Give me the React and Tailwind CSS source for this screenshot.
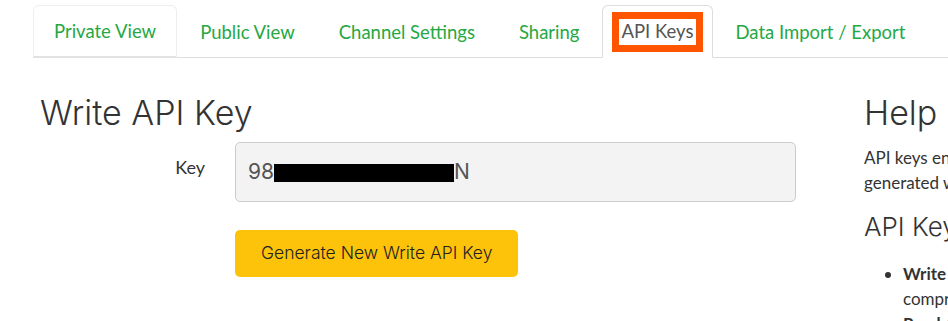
export default function App() {
  const tabs = ['Private View', 'Public View', 'Channel Settings', 'Sharing', 'API Keys', 'Data Import / Export']

  return (
    <div className="w-[948px] h-[321px] overflow-hidden bg-white font-['Lato',sans-serif] text-[#333]">
      {/* Tabs */}
      <ul className="ml-[33px] pt-[5px] flex border-b border-[#ddd]">
        {tabs.map((t) => {
          if (t === 'API Keys') {
            return (
              <li key={t} className="mr-[2px] -mb-px">
                <div className="h-[53px] px-[9px] flex items-center bg-white border border-[#ddd] border-b-white rounded-t-[6px]">
                  <span className="border-[7px] border-[#ff5500] px-[2px] h-[40px] flex items-center text-[18.5px] text-[#555]">
                    {t}
                  </span>
                </div>
              </li>
            )
          }
          const hover = t === 'Private View'
          return (
            <li key={t} className="mr-[2px] -mb-px">
              <div
                className={
                  hover
                    ? 'h-[53px] px-5 pt-[2px] flex items-center border border-[#eee] border-b-2 border-b-[#e2e2e2] rounded-t-[6px] text-[18.5px] text-[#25a844]'
                    : 'h-[53px] px-5 pt-[2px] flex items-center border border-transparent text-[18.5px] text-[#25a844]'
                }
              >
                {t}
              </div>
            </li>
          )
        })}
      </ul>

      <div className="flex">
        {/* Left column */}
        <div className="ml-[40px] w-[756px] shrink-0">
          <h1 className="mt-[35px] font-['Inter',sans-serif] font-light text-[34px] leading-[40px] text-[#333]">
            Write API Key
          </h1>
          <div className="mt-[9px] flex">
            <label className="w-[195px] pr-[30px] text-right text-[18px] pt-[12px] text-[#333]">Key</label>
            <div className="w-[561px] h-[60px] rounded-[5px] border border-[#ccc] bg-[#f3f3f3] flex items-center pl-[12px] font-['Inter',sans-serif] text-[21px] text-[#555]">
              <span>98</span>
              <span className="inline-block w-[180px] h-[18px] bg-black mt-[2px]" />
              <span>N</span>
            </div>
          </div>
          <button className="mt-[28px] ml-[195px] h-[47px] px-[26px] rounded-[5px] bg-[#fdc20a] font-['Inter',sans-serif] font-light text-[17.5px] text-[#222]">
            Generate New Write API Key
          </button>
        </div>

        {/* Help column */}
        <div className="ml-[68px] w-[760px] shrink-0">
          <h1 className="mt-[35px] font-['Inter',sans-serif] font-light text-[34px] leading-[40px] text-[#333]">Help</h1>
          <p className="mt-[12px] text-[17px] leading-[25px] text-[#333] whitespace-nowrap">
            API keys enable you to write data to a channel or read data from a private channel. API keys are auto-
            <br />
            generated when you create a new channel.
          </p>
          <h2 className="mt-[16px] font-['Inter',sans-serif] font-light text-[26px] leading-[32px]">API Keys Settings</h2>
          <ul className="mt-[18px] pl-[39px] list-disc text-[17px] leading-[25px] whitespace-nowrap">
            <li>
              <b>Write API Key</b>: Use this key to write data to a channel. If you feel your key has been
              <br />
              compromised, click Generate New Write API Key.
            </li>
            <li>
              <b>Read API Keys</b>: Use this key to allow other people to view your private channel feeds.
            </li>
          </ul>
        </div>
      </div>
    </div>
  )
}
